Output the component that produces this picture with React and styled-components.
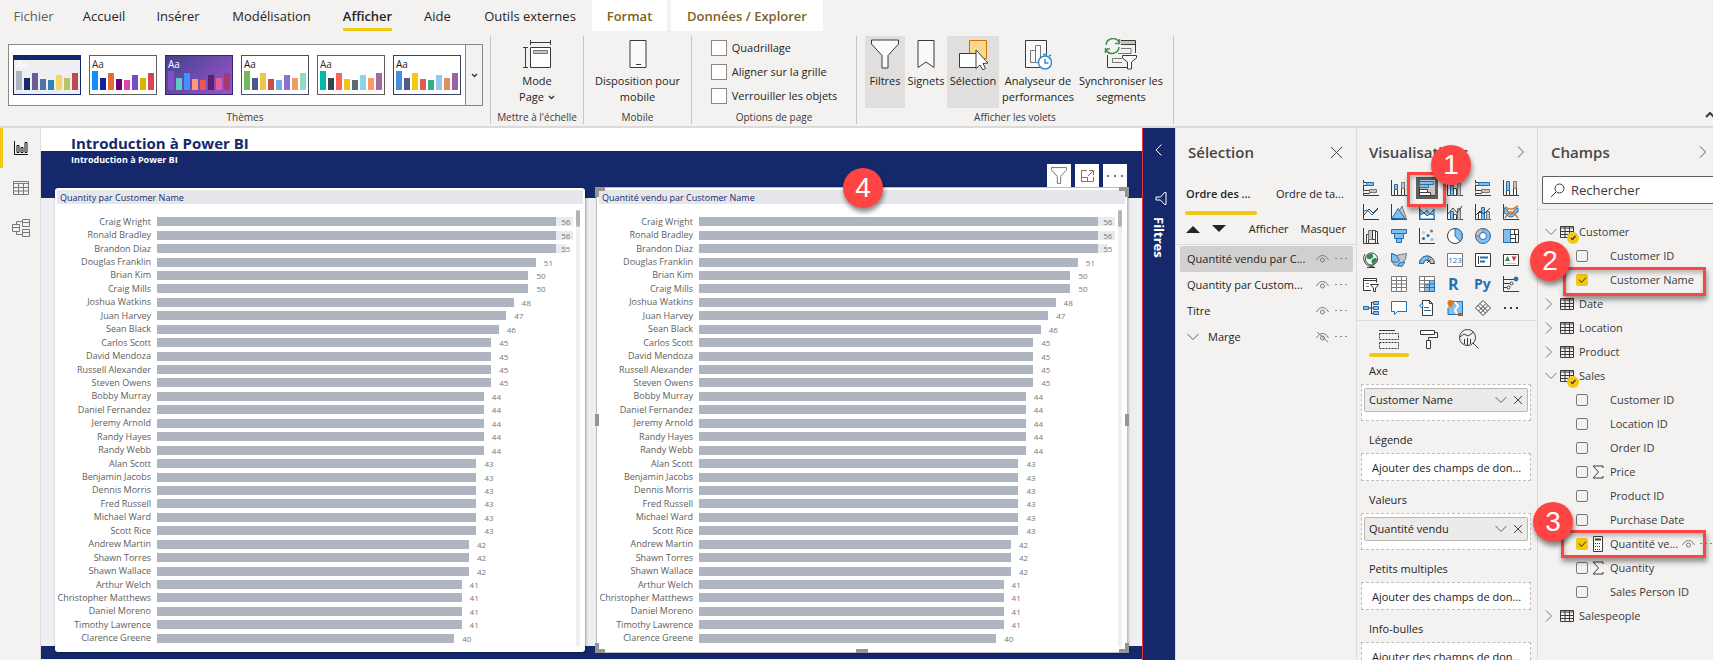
import React from "react";
import styled, { createGlobalStyle, css } from "styled-components";

const navy = "#15286c";
const yellow = "#f2c811";
const ink = "#252423";
const line = "#dddbd9";
const red = "#ff4444";

const Global = createGlobalStyle`
  *, *::before, *::after { box-sizing: border-box; }
  body { margin: 0; background: #f3f2f1; color: ${ink}; font: 13px/16px "Open Sans", "Noto Sans", sans-serif; }
  button { font: inherit; color: inherit; background: none; border: 0; padding: 0; margin: 0; text-align: inherit; }
  h1, h2, h3, p, ul { margin: 0; padding: 0; font: inherit; list-style: none; }
  svg { display: block; flex: none; }
`;

/* ---------- shell ---------- */

const Shell = styled.div`
  height: 100vh;
  display: flex;
  flex-direction: column;
  overflow: hidden;
`;
const Workspace = styled.div`
  flex: 1;
  min-height: 0;
  display: grid;
  grid-template-columns: 41px minmax(0, 1fr) 33px 181px 181px 176px;
`;

/* ---------- ribbon ---------- */

const TabBar = styled.nav`
  display: flex;
  height: 32px;
`;
const Tab = styled.button`
  flex: none;
  width: ${(p) => p.$w}px;
  height: 31px;
  display: flex;
  justify-content: center;
  white-space: nowrap;
  font-size: 13px;
  ${(p) => p.$muted && css`color: #605e5c;`}
  ${(p) => p.$active && css`font-weight: 600;`}
  ${(p) => p.$context && css`
    background: #fff;
    color: #7a6325;
    font-weight: 600;
    margin-right: 4px;
  `}
`;
const TabText = styled.span`
  height: 31px;
  line-height: 32px;
  border-bottom: 3px solid ${(p) => (p.$active ? yellow : "transparent")};
`;
const Ribbon = styled.div`
  display: flex;
  height: 96px;
  padding-top: 4px;
  border-bottom: 2px solid ${line};
`;
const Group = styled.section`
  flex: none;
  width: ${(p) => p.$w}px;
  height: 88px;
  display: flex;
  flex-direction: column;
  align-items: center;
  border-right: 1px solid #c8c6c4;
`;
const GroupBody = styled.div`
  height: 77px;
  display: flex;
  gap: ${(p) => p.$gap || 0}px;
`;
const GroupName = styled.h2`
  font-size: 10px;
  line-height: 14px;
  color: #3b3a39;
  white-space: nowrap;
`;
const Gallery = styled.div`
  height: 62px;
  margin: 8px 0 0 1px;
  display: flex;
  align-items: center;
  background: #fff;
  border: 1px solid #8a8886;
`;
const Thumbs = styled.div`
  display: flex;
  gap: 8px;
  padding: 0 4px;
`;
const Thumb = styled.button`
  width: 68px;
  height: 40px;
  padding: 2px 2px 4px;
  display: flex;
  flex-direction: column;
  justify-content: space-between;
  border: 1px solid ${(p) => p.$edge};
  background: ${(p) => p.$bg};
  color: ${(p) => p.$ink};
  font-size: 10px;
  line-height: 12px;
`;
const MiniBars = styled.span`
  display: flex;
  align-items: flex-end;
  gap: 2px;
  height: 19px;
`;
const MiniBar = styled.i`
  width: 6px;
  height: ${(p) => p.$h}px;
  background: ${(p) => p.$c};
`;
const GalleryMore = styled.button`
  width: 17px;
  height: 60px;
  display: grid;
  place-items: center;
  background: #f3f2f1;
  border-left: 1px solid #8a8886;
`;
const Tool = styled.button`
  width: ${(p) => p.$w}px;
  height: 72px;
  padding-top: 2px;
  display: flex;
  flex-direction: column;
  align-items: center;
  gap: 3px;
  font-size: 11px;
  line-height: 16px;
  text-align: center;
  white-space: nowrap;
  background: ${(p) => (p.$on ? "#e1dfdd" : "none")};
`;
const ToolText = styled.span`
  display: flex;
  align-items: center;
  gap: 4px;
`;
const Options = styled.div`
  display: flex;
  flex-direction: column;
`;
const Option = styled.label`
  display: flex;
  align-items: center;
  gap: 5px;
  height: 24px;
  font-size: 11px;
`;
const Box = styled.input`
  appearance: none;
  flex: none;
  width: 16px;
  height: 16px;
  margin: 0;
  background: #fff;
  border: 1px solid #8a8886;
`;
const Collapse = styled.button`
  margin-left: auto;
  align-self: flex-end;
  padding-bottom: 8px;
  overflow: hidden;
`;

/* ---------- left navigation ---------- */

const Rail = styled.nav`
  border-right: 1px solid ${line};
`;
const RailItem = styled.button`
  width: 100%;
  height: 40px;
  padding-left: 9px;
  display: flex;
  align-items: center;
  border-left: 3px solid ${(p) => (p.$on ? yellow : "transparent")};
`;

/* ---------- report canvas ---------- */

const Canvas = styled.main`
  display: flex;
  flex-direction: column;
  min-height: 0;
  padding: 0 15px 8px 14px;
  background:
    linear-gradient(#fff 23px, ${navy} 23px, ${navy} 70px, transparent 70px),
    linear-gradient(to top, #f3f2f1 1px, ${navy} 1px, ${navy} 14px, #eeeff2 14px);
`;
const ReportHead = styled.header`
  flex: none;
  height: 60px;
  display: flex;
  justify-content: space-between;
  align-items: flex-end;
  padding: 0 0 1px 16px;
`;
const Titles = styled.div`
  align-self: flex-start;
  padding-top: 3px;
  font-weight: 700;
`;
const ReportTitle = styled.h1`
  font-size: 15px;
  line-height: 24px;
  font-weight: 700;
  color: ${navy};
  height: 21px;
`;
const ReportSub = styled.p`
  font-size: 9px;
  line-height: 16px;
  color: #fff;
`;
const VisualTools = styled.div`
  display: flex;
  gap: 4px;
`;
const VisualTool = styled.button`
  width: 24px;
  height: 23px;
  display: grid;
  place-items: center;
  background: #fff;
`;
const Cards = styled.div`
  flex: 1;
  min-height: 0;
  display: grid;
  grid-template-columns: 1fr 1fr;
  gap: 12px;
`;
const Card = styled.article`
  position: relative;
  display: flex;
  flex-direction: column;
  min-height: 0;
  padding: 2px 2px 7px;
  background: #fff;
  border-radius: 3px;
  box-shadow: 1px 1px 3px rgba(0, 0, 0, 0.35);
  ${(p) => p.$selected && css`outline: 1px solid #c0bfbf; border-radius: 0;`}
`;
const CardTitle = styled.h2`
  flex: none;
  height: 14px;
  padding-left: 3px;
  font-size: 9px;
  line-height: 16px;
  background: #e6e7eb;
  color: ${navy};
`;
const ChartArea = styled.div`
  flex: 1;
  min-height: 0;
  display: flex;
  gap: 3px;
  padding: 11px 3px 0 0;
`;
const Plot = styled.ul`
  flex: 1;
  min-height: 0;
  display: grid;
  grid-auto-rows: 1fr;
`;
const BarRow = styled.li`
  min-height: 0;
  display: grid;
  grid-template-columns: 94px minmax(0, 1fr);
  column-gap: 6px;
  align-items: center;
`;
const Category = styled.span`
  font-size: 9px;
  line-height: 12px;
  text-align: right;
  white-space: nowrap;
  color: #605e5c;
`;
const Track = styled.span`
  display: flex;
  height: 9px;
`;
const Bar = styled.span`
  flex: none;
  background: #aeb5c1;
`;
const Tail = styled.span`
  flex: none;
  display: flex;
  align-items: center;
  padding-left: ${(p) => (p.$inside ? 5 : 8)}px;
  background: ${(p) => (p.$inside ? "#eaebef" : "none")};
`;
const Value = styled.span`
  font-size: 8px;
  line-height: 10px;
  padding-top: 1px;
  color: #777;
`;
const Scroll = styled.div`
  width: 4px;
  margin-top: -5px;
  margin-bottom: -2px;
  border-radius: 2px;
  background: #f0f0f0;
`;
const ScrollThumb = styled.div`
  height: 17px;
  border-radius: 2px;
  background: #b3b3b3;
`;
const Handle = styled.i`
  position: absolute;
  width: 10px;
  height: 10px;
  border: 0 solid #979593;
  ${(p) => p.$at === "tl" && css`top: -1px; left: -2px; border-width: 4px 0 0 4px;`}
  ${(p) => p.$at === "tr" && css`top: -1px; right: -2px; border-width: 4px 4px 0 0;`}
  ${(p) => p.$at === "bl" && css`bottom: -1px; left: -2px; border-width: 0 0 4px 4px;`}
  ${(p) => p.$at === "br" && css`bottom: -1px; right: -2px; border-width: 0 4px 4px 0;`}
  ${(p) => p.$at === "l" && css`top: 226px; left: -2px; width: 4px; height: 12px; background: #979593;`}
  ${(p) => p.$at === "r" && css`top: 226px; right: -2px; width: 4px; height: 12px; background: #979593;`}
  ${(p) => p.$at === "b" && css`bottom: -1px; left: calc(50% - 6px); width: 12px; height: 4px; background: #979593;`}
`;

/* ---------- numbered callouts ---------- */

const Badge = styled.span`
  position: absolute;
  z-index: 3;
  left: ${(p) => p.$x}px;
  top: ${(p) => p.$y}px;
  width: 40px;
  height: 40px;
  border-radius: 50%;
  background: ${red};
  color: #fff;
  font: 28px/40px "Liberation Sans", Arial, sans-serif;
  text-align: center;
  box-shadow: 1px 4px 5px rgba(0, 0, 0, 0.45);
`;
const Frame = styled.span`
  position: absolute;
  z-index: 2;
  pointer-events: none;
  border: 3px solid ${red};
  box-shadow: 1px 4px 5px rgba(0, 0, 0, 0.4), inset 1px 3px 4px rgba(0, 0, 0, 0.25);
  left: ${(p) => p.$x}px;
  top: ${(p) => p.$y}px;
  width: ${(p) => p.$w}px;
  height: ${(p) => p.$h}px;
`;

/* ---------- side panes ---------- */

const FilterPane = styled.aside`
  display: flex;
  flex-direction: column;
  align-items: center;
  background: ${navy};
  border-left: 1px solid #e8343f;
  color: #fff;
  padding-top: 16px;
`;
const FilterName = styled.h2`
  writing-mode: vertical-rl;
  margin-top: 12px;
  font-size: 13px;
  line-height: 16px;
  font-weight: 700;
`;
const FilterGlyph = styled.span`
  margin-top: 36px;
  padding-left: 4px;
`;
const Pane = styled.aside`
  min-width: 0;
  min-height: 0;
  display: flex;
  flex-direction: column;
  border-left: 1px solid ${line};
`;
const PaneHead = styled.header`
  flex: none;
  height: 48px;
  display: flex;
  align-items: center;
  justify-content: space-between;
  padding: 0 ${(p) => p.$right}px 0 ${(p) => p.$left}px;
`;
const PaneTitle = styled.h2`
  font-size: 15px;
  font-weight: 600;
  line-height: 20px;
  color: #484644;
`;
const OrderTabs = styled.div`
  display: flex;
  gap: 18px;
  padding: 5px 9px 0 9px;
  height: 39px;
`;
const OrderTab = styled.button`
  width: 72px;
  height: 34px;
  padding: 0 0 8px 1px;
  white-space: nowrap;
  font-size: 11px;
  font-weight: ${(p) => (p.$on ? 600 : 400)};
  position: relative;
  &::after {
    content: "";
    display: ${(p) => (p.$on ? "block" : "none")};
    position: absolute;
    left: 0;
    right: 0;
    bottom: 0;
    height: 4px;
    border-radius: 2px;
    background: ${yellow};
  }
`;
const OrderBar = styled.div`
  height: 30px;
  display: flex;
  align-items: center;
  gap: 12px;
  padding: 0 10px 2px;
  font-size: 11px;
  border-bottom: 1px solid ${line};
`;
const Layers = styled.ul`
  padding-top: 1px;
`;
const Push = styled.span`
  margin-left: auto;
  display: flex;
  align-items: center;
  gap: ${(p) => p.$gap || 6}px;
`;
const Layer = styled.li`
  height: 26px;
  margin: 0 3px 0 4px;
  padding: 0 6px 0 7px;
  display: flex;
  align-items: center;
  white-space: nowrap;
  font-size: 11px;
  border-radius: 2px;
  background: ${(p) => (p.$on ? "#d2d0ce" : "none")};
`;
const LayerChevron = styled.span`
  width: 21px;
`;

const VisualGrid = styled.div`
  display: grid;
  grid-template-columns: repeat(6, 28px);
  grid-auto-rows: 24px;
  height: 145px;
  border-bottom: 1px solid ${line};
`;
const VisualBtn = styled.button`
  position: relative;
  display: flex;
  align-items: center;
  padding-left: 6px;
  ${(p) => p.$on && css`
    & > svg { background: #c8c6c4; outline: 3px solid #605e5c; }
  `}
`;
const ModeTabs = styled.div`
  height: 37px;
  display: flex;
  padding-left: 12px;
`;
const ModeTab = styled.button`
  width: 40px;
  height: 36px;
  display: grid;
  place-items: center;
  position: relative;
  &::after {
    content: "";
    display: ${(p) => (p.$on ? "block" : "none")};
    position: absolute;
    left: 0;
    right: 0;
    bottom: 0;
    height: 4px;
    border-radius: 2px;
    background: ${yellow};
  }
`;
const Wells = styled.div`
  flex: 1;
  min-height: 0;
  overflow: hidden;
`;
const WellName = styled.h3`
  padding-left: 12px;
  font-size: 11px;
  line-height: 26px;
`;
const Well = styled.div`
  margin: 0 6px 6px 4px;
  min-height: 28px;
  padding: 3px 2px 8px;
  background: #fff;
  border: 1px dashed #c0bebc;
`;
const WellHint = styled.p`
  padding: 0 0 0 8px;
  height: 15px;
  font-size: 11px;
  line-height: 22px;
  white-space: nowrap;
`;
const Chip = styled.div`
  height: 24px;
  display: flex;
  align-items: center;
  padding: 0 4px;
  font-size: 11px;
  background: #edebe9;
  border: 1px solid #bab8b7;
  border-radius: 2px;
`;

const SearchBox = styled.label`
  flex: none;
  margin-left: 4px;
  height: 28px;
  padding-left: 7px;
  display: flex;
  align-items: center;
  gap: 6px;
  background: #fff;
  border: 1px solid #605e5c;
  border-right: 0;
  border-radius: 2px 0 0 2px;
`;
const SearchInput = styled.input`
  flex: 1;
  min-width: 0;
  border: 0;
  padding: 0;
  outline: 0;
  background: none;
  font: 13px/20px "Open Sans", sans-serif;
  color: ${ink};
  &::placeholder { color: #3b3a39; opacity: 1; }
`;
const Tree = styled.ul`
  margin-top: 5px;
  padding-top: 10px;
  border-top: 1px solid ${line};
  font-size: 11px;
  color: #3b3a39;
`;
const TableRow = styled.li`
  height: 24px;
  display: flex;
  align-items: center;
  padding-left: 7px;
`;
const NodeToggle = styled.button`
  width: 15px;
`;
const TableIcon = styled.span`
  position: relative;
  width: 19px;
`;
const UsedMark = styled.span`
  position: absolute;
  left: 7px;
  top: 6px;
  width: 12px;
  height: 12px;
  border-radius: 50%;
  background: ${yellow};
  display: grid;
  place-items: center;
`;
const FieldRow = styled.li`
  position: relative;
  height: 24px;
  display: flex;
  align-items: center;
  padding-left: 38px;
  white-space: nowrap;
`;
const FieldLabel = styled.label`
  display: flex;
  align-items: center;
`;
const FieldCheck = styled.input`
  appearance: none;
  position: relative;
  width: 12px;
  height: 12px;
  margin: 0;
  border: 1px solid #797775;
  border-radius: 2px;
  &:checked { background: ${yellow}; border-color: ${yellow}; }
  &:checked::after {
    content: "";
    position: absolute;
    left: 2px;
    top: 2px;
    width: 7px;
    height: 4px;
    border: solid #5c5120;
    border-width: 0 0 1px 1px;
    transform: rotate(-45deg);
  }
`;
const FieldKind = styled.span`
  width: 22px;
  padding-left: 4px;
`;
const FieldTools = styled.span`
  display: flex;
  align-items: center;
  gap: 5px;
  margin-left: 4px;
  overflow: hidden;
`;

/* ---------- icons ---------- */

const K = "#3b3a39";
const B = "#1f6fb2";
const L = "#83beec";
const G = "#7a7876";
const LG = "#c8c6c4";

const Ic = ({ w = 16, h = 16, children, ...r }) => (
  <svg width={w} height={h} viewBox={`0 0 ${w} ${h}`} fill="none" stroke={K} aria-hidden="true" {...r}>{children}</svg>
);
const axis = <path d="M.5 0v15.5H16" />;

const visualIcons = {
  "Barres empilées": <>{axis}<path d="M.5 2.5h3v3h-3M.5 10.5h6v3h-6" fill="#fff" /><path d="M3.5 2.5h7v3h-7z" fill={L} stroke={B} /><path d="M6.5 9.5h7v3h-7z" fill={LG} stroke={G} /></>,
  "Histogramme empilé": <>{axis}<path d="M3.5 9.5h3v6h-3zM10.5 6.5h3v9h-3z" fill="#fff" /><path d="M3.5 4.5h3v5h-3z" fill={L} stroke={B} /><path d="M10.5 2.5h3v6h-3z" fill={LG} stroke={G} /></>,
  "Barres groupées": <><path d="M.5 0v15.5H16" /><path d="M.5 1.5h14v3H.5z" fill={L} stroke={B} /><path d="M.5 4.5h9v3h-9z" fill={L} stroke={B} /><path d="M.5 9.5h8v3h-8zM.5 12.5h11v3H.5z" fill="#fff" /></>,
  "Histogramme groupé": <>{axis}<path d="M3.5 5.5h3v10h-3z" fill={L} stroke={B} /><path d="M6.5 8.5h3v7h-3z" fill="#fff" /><path d="M10.5 3.5h3v12h-3z" fill={LG} stroke={G} /></>,
  "Barres 100 %": <>{axis}<path d="M.5 2.5h3v3h-3M.5 10.5h6v3h-6" fill="#fff" /><path d="M3.5 2.5h11v3h-11z" fill={L} stroke={B} /><path d="M6.5 9.5h8v3h-8z" fill={LG} stroke={G} /></>,
  "Histogramme 100 %": <>{axis}<path d="M3.5 10.5h3v5h-3zM10.5 8.5h3v7h-3z" fill="#fff" /><path d="M3.5 1.5h3v9h-3z" fill={L} stroke={B} /><path d="M10.5 1.5h3v7h-3z" fill={LG} stroke={G} /></>,
  "Courbes": <>{axis}<path d="M1 11l5-6 4 4 5-5" /><path d="M1 7l3-1 5 5 6-6" stroke={B} /></>,
  "Aires": <>{axis}<path d="M7 9l4-7 4.500 13h-9z" fill={LG} stroke={G} /><path d="M1 14.500l6-10 7 10z" fill={L} stroke={B} /></>,
  "Aires empilées": <>{axis}<path d="M1 5l4 4 3-3 3 4 4-5v10H1z" fill={L} stroke={B} /><path d="M1 11l4-2 3 3 3-2 4 1v4H1z" fill="#fff" stroke={B} /></>,
  "Courbes et histogramme empilé": <>{axis}<path d="M3.5 7.500h3v8h-3z" fill={L} stroke={B} /><path d="M6.5 10.500h3v5h-3z" fill="#fff" /><path d="M10.500 4.500h3v11h-3z" fill={LG} stroke={G} /><path d="M1 10l5-6 4 5 5-7" /></>,
  "Courbes et histogramme groupé": <>{axis}<path d="M3.5 8.500h3v7h-3z" fill="#fff" /><path d="M6.5 3.500h3v12h-3z" fill={L} stroke={B} /><path d="M11.500 7.500h3v8h-3z" fill={LG} stroke={G} /><path d="M1 11l4-4 4 3 6-6" /></>,
  "Ruban": <>{axis}<path d="M1 4c4 0 4 6 7 6s3-6 7-6v4c-3 0-3 5-7 5s-4-4-7-4z" fill={L} stroke={B} /><path d="M2 14l4-6h4l5 6M2 3l4 2h4l5-3" stroke="#d97a1d" strokeWidth="1.500" /></>,
  "Cascade": <>{axis}<path d="M3.500 6.500h2v9h-2zM12.500 3.500h2v12h-2z" fill="#fff" /><path d="M5.500 2.500h4v9h-4z" fill={LG} stroke={G} /><path d="M9.500 2.500h3v9h-3z" fill="#fff" /></>,
  "Entonnoir": <><path d="M.5 1.500h15v4H.5z" fill={L} stroke={B} /><path d="M3.500 5.500h9v5h-9z" fill={L} stroke={B} /><path d="M5.500 10.500h5v4h-5z" fill={L} stroke={B} /></>,
  "Nuage de points": <>{axis}<g stroke="none"><circle cx="4.500" cy="10.500" r="1.500" fill={B} /><circle cx="9" cy="7.500" r="1.500" fill={B} /><circle cx="13" cy="11.500" r="1.500" fill={L} /><circle cx="4.500" cy="4.500" r="1.500" fill={LG} /><circle cx="12.500" cy="3" r="1.500" fill={G} /></g></>,
  "Secteurs": <><circle cx="8" cy="8" r="7.500" fill="#fff" /><path d="M8 .5A7.500 7.500 0 0113 13.500L8 8z" fill={L} stroke={B} /></>,
  "Anneau": <><circle cx="8" cy="8" r="7.500" fill={L} stroke={B} /><path d="M8 .5A7.500 7.500 0 00.5 8h4A3.500 3.500 0 018 4.500z" fill={LG} stroke={G} /><circle cx="8" cy="8" r="3.500" fill="#fff" stroke={B} /></>,
  "Compartimentage": <><path d="M.5 1.500h15v13H.5z" fill="#fff" /><path d="M.5 1.500h7v13h-7z" fill={L} stroke={B} /><path d="M7.500 6.500h8M11.500 1.500v5M7.500 10.500h5v4M12.500 6.500v8" /></>,
  "Carte": <><circle cx="8.500" cy="7" r="6" fill="#fff" /><path d="M5 3l4-1 1 3-3 2-3-1zM9 8l3-2 2 2-3 4-2-1z" fill="#2e8b57" stroke="#2e8b57" /><path d="M2 2a8 8 0 009 12M8 13v2M4 15.500h8" /></>,
  "Carte choroplèthe": <><path d="M.5 1.500l5 2 4-1 6-1-1 6-3 3-4 4-5-2-1-3z" fill={LG} stroke={G} /><path d="M.5 1.500l5 2 3 5-3 2-5-1zM8 11l6-1-3 4.500-4-1z" fill={L} stroke={B} /></>,
  "Jauge": <><path d="M.5 11.500a7.500 7.500 0 0115 0h-4a3.500 3.500 0 00-7 0z" fill={LG} stroke={K} /><path d="M.5 11.500a7.500 7.500 0 0110-7L8.500 8a3.500 3.500 0 00-4 3.500z" fill={L} stroke={B} /><path d="M8 11l4-4" /></>,
  "Carte de valeur": <><path d="M.5 1.500h15v13H.5z" fill="#fff" stroke={G} /><text x="8" y="11" fontSize="8" textAnchor="middle" fill={B} stroke="none">123</text></>,
  "Carte à plusieurs lignes": <><path d="M.5 1.500h15v13H.5z" fill="#fff" /><path d="M3.500 4v8" /><path d="M5 5.500h8M5 9.500h5" stroke={B} strokeWidth="2" /></>,
  "KPI": <><path d="M.5 2.500h15v11H.5z" fill="#fff" /><path d="M2 9l2.500-5L7 9z" fill="#2e8b57" stroke="none" /><path d="M8.500 4.500h5l-2.500 5z" fill="#d13438" stroke="none" /><path d="M3 11.500h10" stroke={LG} /></>,
  "Segment": <><path d="M8 14.500H.5v-12h13v4" fill="#fff" /><path d="M1 4.500h12" /><path d="M3 7.500h3M3 10.500h3" stroke={G} /><path d="M7.500 8.500h8l-3 3.500v3.500h-2V12z" fill="#fff" /></>,
  "Table": <><path d="M.5 .5h15v15H.5z" fill="#fff" stroke={G} /><path d="M.5 4.500h15M.5 8h15M.5 11.500h15M5.500 1v14M10.500 1v14" stroke={G} /></>,
  "Matrice": <><path d="M.5 .5h15v15H.5z" fill="#fff" stroke={G} /><path d="M10.500 4.500h5v11h-5zM5.500 8.500h5v7h-5z" fill={L} stroke={B} /><path d="M.5 4.500h15M.5 8h10M.5 11.500h10M5.500 1v14" stroke={G} /><path d="M10.500 8h5M5.500 11.500h10" stroke={B} /></>,
  "Visuel R": <text x="1" y="14" fontSize="16" fontWeight="700" fill={B} stroke="none">R</text>,
  "Visuel Python": <text x="-1" y="13" fontSize="14" fontWeight="700" fill={B} stroke="none">Py</text>,
  "Influenceurs clés": <>{axis}<path d="M1 3.500h10M1 7.500h6M1 11.500h3" /><circle cx="13" cy="3" r="2" fill={B} stroke={B} /><circle cx="8.500" cy="7.500" r="1.500" fill="#fff" /><circle cx="5.500" cy="11.500" r="1.500" fill="#fff" /></>,
  "Arborescence": <><path d="M6 8h4M8 2.500h3M8 13.500h3M8.500 2.500v11" stroke={K} /><path d="M.5 6.500h5v3h-5zM10.500 1.500h5v3h-5zM10.500 6.500h5v3h-5zM10.500 11.500h5v3h-5z" fill={L} stroke={B} /></>,
  "Questions et réponses": <path d="M.5 1.500h15v10h-9l-3 3v-3h-3z" fill="#fff" stroke={B} />,
  "Récit intelligent": <><path d="M3.500 .5h7l3 3v12h-10z" fill="#fff" /><path d="M10.500 .5v3h3" /><path d="M5 7.500h5M5 10.500h7" stroke={B} /><circle cx="2.500" cy="5.500" r="1.500" fill="#fff" stroke={B} /></>,
  "ArcGIS": <><path d="M3 1.500h12.500v13H1V8" fill={L} stroke={B} /><path d="M8 2l3 4-3 4 2 4" stroke="#fff" strokeWidth="2" /><path d="M.5 3a3 3 0 016 0c0 2-3 5-3 5s-3-3-3-5z" fill="#d97a1d" stroke="none" /><path d="M11 13h5v3h-5z" fill="#c25a00" stroke="none" /></>,
  "Power Apps": <><path d="M5 3.500l3-3 3 3 4.500 4.500-7.500 7.500L.5 8z" fill="#fff" /><path d="M5 3.500l7.500 7.500M3 5.500l7.500 7.500M11 3.500L3.500 11M13 5.500L5.500 13" /></>,
  "Obtenir plus de visuels": <g fill={K} stroke="none"><path d="M1 7h2v2H1zM7 7h2v2H7zM13 7h2v2h-2z" /></g>,
};

const Chevron = ({ dir = "down", c = "#605e5c" }) => {
  const d = { down: "M.5 1l5.500 5.500L11.500 1", right: "M1 .5l5.500 5.500L1 11.500", left: "M6.500 .5L1 6l5.500 5.500" }[dir];
  return dir === "down" ? <Ic w={12} h={8} stroke={c}><path d={d} /></Ic> : <Ic w={8} h={12} stroke={c}><path d={d} /></Ic>;
};
const Cross = ({ s = 10 }) => <Ic w={s} h={s} stroke="#484644"><path d={`M1 1l${s - 2} ${s - 2}M${s - 1} 1L1 ${s - 1}`} /></Ic>;
const Eye = ({ off }) => (
  <Ic w={13} h={10} stroke="#797775">
    <path d="M.5 6c3-6 9-6 12 0" /><circle cx="6.500" cy="6" r="2" />
    {off && <path d="M1 0l11 10" />}
  </Ic>
);
const Dots = ({ c = "#8a8886" }) => <Ic w={12} h={2}><path d="M0 0h2v1H0zM5 0h2v1H5zM10 0h2v1h-2z" fill={c} stroke="none" /></Ic>;
const Grid = () => <Ic w={14} h={12}><path d="M.5.5h13v11H.5zM0 2h14M0 5.500h14M0 8.500h14M5 1v10M9.500 1v10" /></Ic>;
const Sigma = () => <Ic w={12} h={14}><path d="M11 3V1H1l5.500 6L1 13h10v-2" /></Ic>;
const Calc = () => (
  <Ic w={12} h={16}>
    <path d="M1.500.5h9v15h-9z" fill="#fff" /><path d="M3 3.500h6" strokeWidth="2" />
    <path d="M3 7.500h6M3 10.500h6M3 13.500h6" strokeDasharray="1 1" />
  </Ic>
);
const Funnel = ({ w = 28, h = 30, c = K, fill = "#fafafa" }) => (
  <svg width={w} height={h} viewBox="0 0 28 30" fill={fill} stroke={c} strokeWidth={28 / w} aria-hidden="true">
    <path d="M.500 1h27v4L17 16.500V29h-6V16.500L.500 5z" />
  </svg>
);

const PageIcon = () => (
  <Ic w={30} h={32}><path d="M8.500 9.500h20v20h-20z" fill="#fff" /><path d="M11.500 12.500h14v3h-14z" fill={LG} stroke={G} /><path d="M8.500 2v5M28.500 2v5M8.500 4.500h20M1 9.500h5M1 29.500h5M3.500 9.500v20" /></Ic>
);
const PhoneIcon = () => <Ic w={18} h={32}><path d="M1 2.500h16v27H1z" fill="#fafafa" /><path d="M7 26.500h5" /></Ic>;
const BookmarkIcon = () => <Ic w={18} h={32}><path d="M1 2.500h16v27l-8-5.500-8 5.500z" fill="#fafafa" /></Ic>;
const SelectionIcon = () => (
  <Ic w={30} h={32}>
    <path d="M11.500 2.500h17v18h-17z" fill="#f8d98b" stroke="#d87000" /><path d="M1.500 15.500h17v14h-17z" fill="#fff" />
    <path d="M18 12l12 13-5 .500 2.500 5-2.500 1.500-3-5-4 3.500z" fill="#fff" />
  </Ic>
);
const PerfIcon = () => (
  <Ic w={28} h={32}>
    <path d="M1.500 2.500h21v27h-21z" fill="#fafafa" /><path d="M6.500 12.500h5v12h-5zM11.500 7.500h5v17h-5z" stroke={G} />
    <circle cx="21" cy="24.500" r="6.500" fill="#fff" stroke="#2f8fd0" strokeWidth="1.500" /><path d="M21 21v4h3.500M19 16.500h4M25 18l2-1" stroke="#2f8fd0" strokeWidth="1.500" />
  </Ic>
);
const SyncIcon = () => (
  <Ic w={34} h={32}>
    <path d="M3.500 17v12.500h20M17 2.500h14.500V15M17 6.500h14" /><path d="M17 3h14v3H17z" fill={LG} stroke="none" /><path d="M17 10.500h10v5H14M18 20.500H8.500v4H18" stroke={G} />
    <path d="M18.500 17.500h14v2.500l-5 4v7h-4v-7l-5-4z" fill="#fff" />
    <path d="M2 7a7 7 0 0113-3M15 9a7 7 0 01-13 3M15.500 1v4.500H11M1.500 15v-4H6" stroke="#3a9150" strokeWidth="1.500" />
  </Ic>
);

/* ---------- data ---------- */

const tabs = [
  { t: "Fichier", w: 67, muted: true }, { t: "Accueil", w: 74 }, { t: "Insérer", w: 74 },
  { t: "Modélisation", w: 113 }, { t: "Afficher", w: 79, active: true }, { t: "Aide", w: 61 },
  { t: "Outils externes", w: 124 }, { t: "Format", w: 75, context: true }, { t: "Données / Explorer", w: 152, context: true },
];
const barHeights = [19, 12, 17, 11, 10, 15, 12, 17];
const themes = [
  { bg: `linear-gradient(${navy} 4px, #efeff3 4px)`, edge: navy, ink: "#fff", c: ["#aeb5c1", "#15286c", "#6a5a93", "#4c74a8", "#3283b3", "#f5d661", "#b6c464", "#bb4a4a"] },
  { bg: "#fff", edge: "#605e5c", ink: "#333", c: ["#118dff", "#12239e", "#e66c37", "#6b007b", "#e044a7", "#744ec2", "#d9b300", "#d64550"] },
  { bg: "linear-gradient(135deg, #44428f, #9a55c8)", edge: "#33266e", ink: "#fff", c: ["#8250c4", "#5ecbc8", "#438fff", "#ff977e", "#eb5757", "#5b2071", "#ec5a96", "#a43b76"] },
  { bg: "#fff", edge: "#4a5068", ink: "#111a35", c: ["#73b761", "#4a588a", "#ecc846", "#cd4c46", "#71afe2", "#8d6fd1", "#ee9e64", "#95dabb"] },
  { bg: "#fff", edge: "#605e5c", ink: "#333", c: ["#01b8aa", "#374649", "#fd625e", "#f2c80f", "#5f6b6d", "#8ad4eb", "#fe9666", "#a66999"] },
  { bg: "#fff", edge: "#3a4060", ink: "#111a35", c: ["#4a8ddc", "#4c5d8a", "#f3c911", "#dc5b57", "#33ae81", "#95c8f0", "#dd915f", "#9a64a0"] },
];
const people = [
  ["Craig Wright", 56], ["Ronald Bradley", 56], ["Brandon Diaz", 55], ["Douglas Franklin", 51], ["Brian Kim", 50],
  ["Craig Mills", 50], ["Joshua Watkins", 48], ["Juan Harvey", 47], ["Sean Black", 46], ["Carlos Scott", 45],
  ["David Mendoza", 45], ["Russell Alexander", 45], ["Steven Owens", 45], ["Bobby Murray", 44], ["Daniel Fernandez", 44],
  ["Jeremy Arnold", 44], ["Randy Hayes", 44], ["Randy Webb", 44], ["Alan Scott", 43], ["Benjamin Jacobs", 43],
  ["Dennis Morris", 43], ["Fred Russell", 43], ["Michael Ward", 43], ["Scott Rice", 43], ["Andrew Martin", 42],
  ["Shawn Torres", 42], ["Shawn Wallace", 42], ["Arthur Welch", 41], ["Christopher Matthews", 41],
  ["Daniel Moreno", 41], ["Timothy Lawrence", 41], ["Clarence Greene", 40],
];
const AXIS_MAX = 56;
const SOLID_MAX = 53.75;
const pct = (v) => `${(v / AXIS_MAX) * 100}%`;

const wells = [
  { name: "Axe", field: "Customer Name" }, { name: "Légende" }, { name: "Valeurs", field: "Quantité vendu" },
  { name: "Petits multiples" }, { name: "Info-bulles" },
];
const salesFields = [
  { t: "Customer ID" }, { t: "Location ID" }, { t: "Order ID" }, { t: "Price", kind: "sum" }, { t: "Product ID" },
  { t: "Purchase Date" }, { t: "Quantité ve...", kind: "calc", checked: true, tools: true, n: 3 },
  { t: "Quantity", kind: "sum" }, { t: "Sales Person ID" },
];

/* ---------- parts ---------- */

function ThemeThumb({ theme }) {
  return (
    <Thumb $bg={theme.bg} $edge={theme.edge} $ink={theme.ink}>
      <span>Aa</span>
      <MiniBars>{theme.c.map((c, i) => <MiniBar key={i} $c={c} $h={barHeights[i]} />)}</MiniBars>
    </Thumb>
  );
}

function BarChart({ title, selected, children }) {
  return (
    <Card $selected={selected}>
      <CardTitle>{title}</CardTitle>
      <ChartArea>
        <Plot>
          {people.map(([name, v]) => {
            const inside = v > SOLID_MAX;
            return (
              <BarRow key={name}>
                <Category>{name}</Category>
                <Track>
                  <Bar style={{ width: pct(Math.min(v, SOLID_MAX)) }} />
                  <Tail $inside={inside} style={{ width: pct(Math.max(0, v - SOLID_MAX)) }}><Value>{v}</Value></Tail>
                </Track>
              </BarRow>
            );
          })}
        </Plot>
        <Scroll><ScrollThumb /></Scroll>
      </ChartArea>
      {selected && ["tl", "tr", "bl", "br", "l", "r", "b"].map((at) => <Handle key={at} $at={at} />)}
      {children}
    </Card>
  );
}

function Field({ t, kind, checked, tools, n }) {
  return (
    <FieldRow>
      <FieldLabel>
        <FieldCheck type="checkbox" defaultChecked={checked} />
        <FieldKind>{kind === "sum" && <Sigma />}{kind === "calc" && <Calc />}</FieldKind>
        {t}
      </FieldLabel>
      {tools && <FieldTools><Eye /><Dots /></FieldTools>}
      {n === 2 && <><Frame $x={25} $y={-1} $w={143} $h={29} /><Badge $x={-8} $y={-27}>2</Badge></>}
      {n === 3 && <><Frame $x={23} $y={-2} $w={145} $h={28} /><Badge $x={-5} $y={-30}>3</Badge></>}
    </FieldRow>
  );
}

function TableNode({ t, open, used }) {
  return (
    <TableRow>
      <NodeToggle aria-label={t}><Chevron dir={open ? "down" : "right"} c="#797775" /></NodeToggle>
      <TableIcon>
        <Grid />
        {used && <UsedMark><Ic w={6} h={6} strokeWidth="1.500"><path d="M1 3l1.500 1.500L5.500 1" /></Ic></UsedMark>}
      </TableIcon>
      {t}
    </TableRow>
  );
}

export default function App() {
  return (
    <Shell>
      <Global />
      <TabBar>
        {tabs.map((x) => (
          <Tab key={x.t} $w={x.w} $muted={x.muted} $active={x.active} $context={x.context}>
            <TabText $active={x.active}>{x.t}</TabText>
          </Tab>
        ))}
      </TabBar>
      <Ribbon>
        <Group $w={491}>
          <GroupBody>
            <Gallery>
              <Thumbs>{themes.map((t, i) => <ThemeThumb key={i} theme={t} />)}</Thumbs>
              <GalleryMore aria-label="Autres thèmes"><Ic w={7} h={5} strokeWidth="1.500"><path d="M1 1l2.500 2.500L6 1" /></Ic></GalleryMore>
            </Gallery>
          </GroupBody>
          <GroupName>Thèmes</GroupName>
        </Group>
        <Group $w={93}>
          <GroupBody>
            <Tool $w={60}><PageIcon /><span>Mode<ToolText>Page <Ic w={7} h={5} strokeWidth="1.500"><path d="M1 1l2.500 2.500L6 1" /></Ic></ToolText></span></Tool>
          </GroupBody>
          <GroupName>Mettre à l'échelle</GroupName>
        </Group>
        <Group $w={108}>
          <GroupBody><Tool $w={92}><PhoneIcon /><span>Disposition pour<br />mobile</span></Tool></GroupBody>
          <GroupName>Mobile</GroupName>
        </Group>
        <Group $w={165}>
          <GroupBody>
            <Options>
              {["Quadrillage", "Aligner sur la grille", "Verrouiller les objets"].map((t) => (
                <Option key={t}><Box type="checkbox" />{t}</Option>
              ))}
            </Options>
          </GroupBody>
          <GroupName>Options de page</GroupName>
        </Group>
        <Group $w={317}>
          <GroupBody $gap={2}>
            <Tool $w={40} $on><Funnel h={32} /><span>Filtres</span></Tool>
            <Tool $w={38}><BookmarkIcon /><span>Signets</span></Tool>
            <Tool $w={52} $on><SelectionIcon /><span>Sélection</span></Tool>
            <Tool $w={74}><PerfIcon /><span>Analyseur de<br />performances</span></Tool>
            <Tool $w={88}><SyncIcon /><span>Synchroniser les<br />segments</span></Tool>
          </GroupBody>
          <GroupName>Afficher les volets</GroupName>
        </Group>
        <Collapse aria-label="Réduire le ruban"><Ic w={8} h={6} strokeWidth="2"><path d="M1 5l4-4 4 4" /></Ic></Collapse>
      </Ribbon>

      <Workspace>
        <Rail>
          <RailItem $on aria-label="Rapport"><Ic w={16} h={16} stroke="#111"><path d="M2.500 1v13.500H16M5 5.500h2v7H5zM9 7.500h2v5H9zM13 2.500h2v10h-2z" /></Ic></RailItem>
          <RailItem aria-label="Données"><Ic w={17} h={16} stroke={G}><path d="M1.500 1.500h15v13h-15zM1 3.500h15M1 7.500h15M1 11h15M6.500 3v12M11.500 3v12" /></Ic></RailItem>
          <RailItem aria-label="Modèle"><Ic w={18} h={18} stroke={G}><path d="M.500 5.500h7v7h-7zM.500 8.500h7M10.500.500h7v7h-7zM10.500 3.500h7M10.500 10.500h7v7h-7zM10.500 13.500h7M4.500 5V2.500h6M4.500 13v2.500h6" /></Ic></RailItem>
        </Rail>

        <Canvas>
          <ReportHead>
            <Titles>
              <ReportTitle>Introduction à Power BI</ReportTitle>
              <ReportSub>Introduction à Power BI</ReportSub>
            </Titles>
            <VisualTools>
              <VisualTool aria-label="Filtres"><Funnel w={16} h={17} c="#797775" fill="none" /></VisualTool>
              <VisualTool aria-label="Mode focus"><Ic w={15} h={14} stroke="#797775"><path d="M7 1.500H1.500v11h12V8M1.500 8.500h6v4M9 1.500h4.500V6M13 2L8 7" /></Ic></VisualTool>
              <VisualTool aria-label="Plus d'options"><Ic w={16} h={2}><path d="M0 0h2v2H0zM7 0h2v2H7zM14 0h2v2h-2z" fill="#797775" stroke="none" /></Ic></VisualTool>
            </VisualTools>
          </ReportHead>
          <Cards>
            <BarChart title="Quantity par Customer Name" />
            <BarChart title="Quantité vendu par Customer Name" selected>
              <Badge $x={246} $y={-20}>4</Badge>
            </BarChart>
          </Cards>
        </Canvas>

        <FilterPane>
          <Chevron dir="left" c="#fff" />
          <FilterGlyph><Ic w={12} h={13} stroke="#fff"><path d="M11 .500v12H9.500L5.500 8H1V5h4.500l4-4.500z" /></Ic></FilterGlyph>
          <FilterName>Filtres</FilterName>
        </FilterPane>

        <Pane>
          <PaneHead $left={12} $right={13}><PaneTitle>Sélection</PaneTitle><button aria-label="Fermer"><Cross s={13} /></button></PaneHead>
          <OrderTabs><OrderTab $on>Ordre des ...</OrderTab><OrderTab>Ordre de ta...</OrderTab></OrderTabs>
          <OrderBar>
            <button aria-label="Monter"><Ic w={14} h={8}><path d="M0 8l7-7 7 7z" fill={ink} stroke="none" /></Ic></button>
            <button aria-label="Descendre"><Ic w={14} h={8}><path d="M0 0l7 7 7-7z" fill={ink} stroke="none" /></Ic></button>
            <Push $gap={12}><button>Afficher</button><button>Masquer</button></Push>
          </OrderBar>
          <Layers>
            <Layer $on>Quantité vendu par C...<Push><Eye /><Dots /></Push></Layer>
            <Layer>Quantity par Custom...<Push><Eye /><Dots /></Push></Layer>
            <Layer>Titre<Push><Eye /><Dots /></Push></Layer>
            <Layer><LayerChevron><Chevron /></LayerChevron>Marge<Push><Eye off /><Dots /></Push></Layer>
          </Layers>
        </Pane>

        <Pane>
          <PaneHead $left={12} $right={12}><PaneTitle>Visualisations</PaneTitle><button aria-label="Réduire"><Chevron dir="right" /></button></PaneHead>
          <VisualGrid>
            {Object.entries(visualIcons).map(([name, art], i) => (
              <VisualBtn key={name} $on={i === 2} aria-label={name}>
                <Ic overflow="visible">{art}</Ic>
                {i === 2 && <><Frame $x={-6} $y={-4} $w={39} $h={35} /><Badge $x={18} $y={-31}>1</Badge></>}
              </VisualBtn>
            ))}
          </VisualGrid>
          <ModeTabs>
            <ModeTab $on aria-label="Champs"><Ic w={20} h={20}><path d="M0 1.500h16" /><path d="M.500 4.500h19v6H.500zM.500 13.500h19v6H.500z" strokeDasharray="2 1" /></Ic></ModeTab>
            <ModeTab aria-label="Format"><Ic w={20} h={20}><path d="M1.500 1.500h14v4h-14zM15.500 3.500h3v5h-9v3M7.500 11.500h4v8h-4z" fill="#fff" /></Ic></ModeTab>
            <ModeTab aria-label="Analytique"><Ic w={20} h={20}><circle cx="8.500" cy="8.500" r="8" /><path d="M1 8l4-3 4 2 6-4M5.500 10v5M8.500 9v7M11.500 10v5M14 14l5.500 5.500" /></Ic></ModeTab>
          </ModeTabs>
          <Wells>
            {wells.map((w) => (
              <section key={w.name}>
                <WellName>{w.name}</WellName>
                <Well>
                  {w.field
                    ? <Chip>{w.field}<Push $gap={6}><button aria-label="Options du champ"><Chevron /></button><button aria-label="Supprimer le champ"><Cross /></button></Push></Chip>
                    : <WellHint>Ajouter des champs de don...</WellHint>}
                </Well>
              </section>
            ))}
          </Wells>
        </Pane>

        <Pane>
          <PaneHead $left={13} $right={6}><PaneTitle>Champs</PaneTitle><button aria-label="Réduire"><Chevron dir="right" /></button></PaneHead>
          <SearchBox>
            <Ic w={15} h={15}><circle cx="9.500" cy="5.500" r="4.500" /><path d="M6 9l-5 5" /></Ic>
            <SearchInput placeholder="Rechercher" aria-label="Rechercher" />
          </SearchBox>
          <Tree>
            <TableNode t="Customer" open used />
            <Field t="Customer ID" />
            <Field t="Customer Name" checked n={2} />
            <TableNode t="Date" />
            <TableNode t="Location" />
            <TableNode t="Product" />
            <TableNode t="Sales" open used />
            {salesFields.map((f) => <Field key={f.t} {...f} />)}
            <TableNode t="Salespeople" />
          </Tree>
        </Pane>
      </Workspace>
    </Shell>
  );
}
